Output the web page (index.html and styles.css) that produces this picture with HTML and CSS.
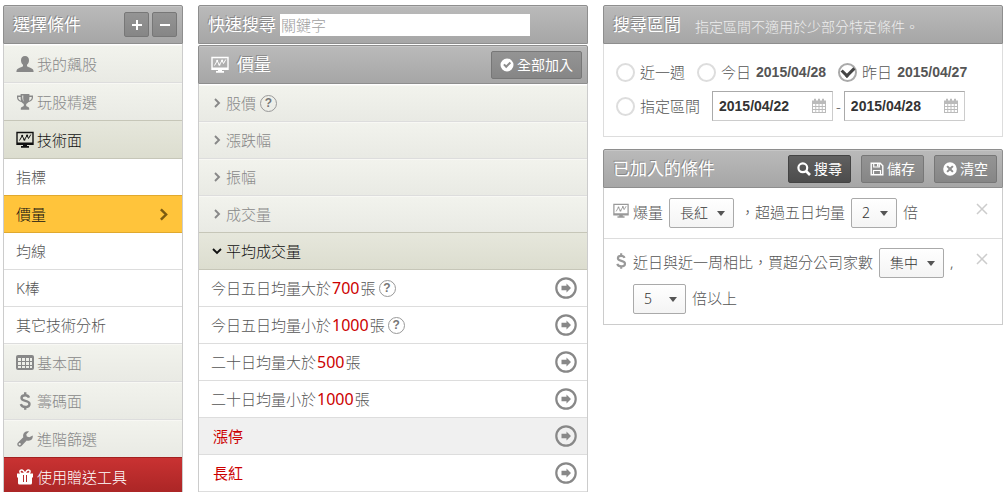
FILE: index.html
```
<!DOCTYPE html>
<html lang="zh-Hant">
<head>
<meta charset="utf-8">
<title>選擇條件</title>
<link rel="stylesheet" href="styles.css">
</head>
<body>
<svg class="defs" aria-hidden="true">
  <symbol id="user" viewBox="0 0 18 18"><path d="M9 1c-2.600 0-4 1.700-4 4.200 0 1.900.8 3.600 2 4.600v1.500c-.4.700-5 1.700-6 3.200-.5.700-.6 1.700-.6 2.500h17.200c0-.8-.1-1.800-.6-2.500-1-1.500-5.600-2.500-6-3.200V9.800c1.200-1 2-2.700 2-4.600C13 2.700 11.600 1 9 1z"/></symbol>
  <symbol id="trophy" viewBox="0 0 18 18"><path fill-rule="evenodd" d="M4.600 1h8.800v1.600H17v2c0 2.300-2 4.300-4.700 4.600-.6.900-1.300 1.400-2.100 1.800v1.600c0 .8.600 1 1.400 1.200 1 .3 1.600.8 1.600 1.900v1H4.800v-1c0-1.100.6-1.600 1.600-1.900.8-.2 1.400-.4 1.400-1.200V11c-.8-.4-1.500-.9-2.100-1.800C3 8.900 1 6.900 1 4.600v-2h3.600zM2.300 3.900v.8c0 1.200 1.100 2.500 2.700 3-.3-1.100-.4-2.400-.4-3.800zm13.400 0h-2.300c0 1.400-.1 2.700-.4 3.800 1.600-.5 2.700-1.800 2.700-3zM6.200 2.600c0 3 .5 5 1.500 6.200-.5-1.800-.6-4-.4-6.200z"/></symbol>
  <symbol id="monitor" viewBox="0 0 18 18"><path d="M1 1.500h16v11.800H1z" fill="none" stroke="currentColor" stroke-width="1.400"/><path d="M1 11.500h16v2H1zM7 13h4v2H7zM5 15h8v1.700H5z"/><path d="M3.500 9.500l2.700-4.700L8.400 9l2.700-4.700 1.400 3.200 2.300-4" fill="none" stroke="currentColor"/><circle cx="6.200" cy="4.800" r="1"/><circle cx="8.400" cy="8.700" r="1"/><circle cx="11.100" cy="4.500" r="1"/></symbol>
  <symbol id="table" viewBox="0 0 18 18"><path fill-rule="evenodd" d="M2 1h14q2 0 2 2v11q0 2-2 2H2q-2 0-2-2V3Q0 1 2 1zM2 4v3h3V4zm4 0v3h3V4zm4 0v3h3V4zm4 0v3h2V4zM2 8v3h3V8zm4 0v3h3V8zm4 0v3h3V8zm4 0v3h2V8zM2 12v2h3v-2zm4 0v2h3v-2zm4 0v2h3v-2zm4 0v2h2v-2z"/></symbol>
  <symbol id="dollar" viewBox="0 0 18 18"><path d="M13 5.600C12.400 4 11 3.300 9.200 3.300c-2.200 0-3.700 1-3.700 2.700 0 4 8 1.700 8 6 0 1.900-1.700 3-4.200 3-2.200 0-3.900-.9-4.500-2.800M9.200.2v3M9.200 15v2.800" fill="none" stroke="currentColor" stroke-width="2.400"/></symbol>
  <symbol id="wrench" viewBox="0 0 18 18"><path fill-rule="evenodd" d="M16.700 5.400c.4 1.800-.3 3.500-1.700 4.500-1.300.9-2.900 1-4.300.5L5.500 15.900c-1 1-2.500 1-3.500 0s-1-2.500 0-3.500l5.300-5.200c-.5-1.600-.1-3.400 1.100-4.600 1.300-1.200 3-1.500 4.600-1.100l-2.700 2.700.5 2.400 2.500.6zM3.700 13a1.100 1.100 0 1 0 .1 2.200 1.100 1.100 0 0 0-.1-2.200z"/></symbol>
  <symbol id="gift" viewBox="0 0 18 18"><path fill-rule="evenodd" d="M1 5.500h3.200C2.900 4.600 2.800 2.800 4 1.800c1.500-1.200 3.200-.3 4 .8l1 1.300 1-1.300c.8-1.100 2.500-2 4-.8 1.200 1 1.100 2.800-.2 3.700H17v4h-1V15q0 1.500-1.500 1.500h-11Q2 16.500 2 15V9.500H1zM5 3c-.7.700-.2 1.800.8 1.800h2L6.700 3.300C6.300 2.700 5.500 2.500 5 3zm8 0c-.5-.5-1.300-.3-1.700.3l-1.100 1.500h2c1 0 1.500-1.100.8-1.800zM7 7v7h1V7zm3 0v7h1V7z"/></symbol>
  <symbol id="right" viewBox="0 0 10 10"><path d="M3 1l4 4-4 4" fill="none" stroke="currentColor" stroke-width="1.900"/></symbol>
  <symbol id="down" viewBox="0 0 10 10"><path d="M1 3l4 4 4-4" fill="none" stroke="currentColor" stroke-width="1.900"/></symbol>
  <symbol id="plus" viewBox="0 0 10 10"><path d="M5 0v10M0 5h10" stroke="currentColor" stroke-width="2"/></symbol>
  <symbol id="minus" viewBox="0 0 10 10"><path d="M0 5h10" stroke="currentColor" stroke-width="2"/></symbol>
  <symbol id="add" viewBox="0 0 22 22"><circle cx="11" cy="11" r="9.700" fill="none" stroke="currentColor" stroke-width="2.200"/><path d="M6.500 8.700h5V6.500L16 11l-4.500 4.500v-2.200h-5z"/></symbol>
  <symbol id="check" viewBox="0 0 14 14"><path fill-rule="evenodd" d="M7 .5a6.500 6.500 0 1 1 0 13 6.500 6.500 0 0 1 0-13zM3.200 7l3 3.200 4.900-5-1.400-1.400-3.500 3.500-1.500-1.600z"/></symbol>
  <symbol id="cancel" viewBox="0 0 14 14"><path fill-rule="evenodd" d="M7 .2a6.800 6.800 0 1 1 0 13.600A6.800 6.800 0 0 1 7 .2zM4.800 3.400L3.400 4.800 5.600 7 3.400 9.200l1.400 1.400L7 8.400l2.200 2.200 1.400-1.400L8.400 7l2.200-2.200-1.400-1.400L7 5.600z"/></symbol>
  <symbol id="search" viewBox="0 0 14 14"><circle cx="5.800" cy="5.800" r="4.400" fill="none" stroke="currentColor" stroke-width="2.200"/><path d="M9 9l4 4" stroke="currentColor" stroke-width="2.600"/></symbol>
  <symbol id="save" viewBox="0 0 14 14"><path d="M1.200 1.200h9l2.600 2.600v9H1.200z" fill="none" stroke="currentColor" stroke-width="1.400"/><path d="M3.700 1v4h5.600V1M3.500 13V8.500h7V13" fill="none" stroke="currentColor" stroke-width="1.200"/><path d="M7 1.500h1.500v3H7z"/></symbol>
  <symbol id="calendar" viewBox="0 0 16 16"><path fill-rule="evenodd" d="M1 2.500h2V.8h2v1.700h2V.8h2v1.700h2V.8h2v1.700h2V15H1zM2 6v2h2.300V6zm3.200 0v2h2.300V6zm3.300 0v2h2.300V6zm3.200 0v2H14V6zM2 9v2h2.300V9zm3.200 0v2h2.300V9zm3.300 0v2h2.300V9zm3.200 0v2H14V9zM2 12v2h2.300v-2zm3.200 0v2h2.300v-2zm3.300 0v2h2.300v-2zm3.200 0v2H14v-2z"/></symbol>
  <symbol id="close" viewBox="0 0 12 12"><path d="M1 1l10 10M11 1L1 11" stroke="currentColor" stroke-width="1.500"/></symbol>
</svg>

<main class="page">
  <nav class="column">
    <header class="bar">
      <h2 class="title">選擇條件</h2>
      <div class="tools tight">
        <button class="btn square" aria-label="展開"><svg class="icon tiny"><use href="#plus"/></svg></button>
        <button class="btn square" aria-label="收合"><svg class="icon tiny"><use href="#minus"/></svg></button>
      </div>
    </header>
    <ul class="list">
      <li><a class="group" href="#"><svg class="icon"><use href="#user"/></svg>我的飆股</a></li>
      <li><a class="group" href="#"><svg class="icon"><use href="#trophy"/></svg>玩股精選</a></li>
      <li><a class="group open" href="#"><svg class="icon"><use href="#monitor"/></svg>技術面</a></li>
      <li><a class="item" href="#">指標</a></li>
      <li><a class="item current" href="#">價量<svg class="icon arrow"><use href="#right"/></svg></a></li>
      <li><a class="item" href="#">均線</a></li>
      <li><a class="item" href="#">K棒</a></li>
      <li><a class="item" href="#">其它技術分析</a></li>
      <li><a class="group" href="#"><svg class="icon"><use href="#table"/></svg>基本面</a></li>
      <li><a class="group" href="#"><svg class="icon"><use href="#dollar"/></svg>籌碼面</a></li>
      <li><a class="group" href="#"><svg class="icon"><use href="#wrench"/></svg>進階篩選</a></li>
      <li><a class="group gift" href="#"><svg class="icon"><use href="#gift"/></svg>使用贈送工具</a></li>
    </ul>
  </nav>

  <section class="column">
    <div class="bar find">
      <label class="title" for="keyword">快速搜尋</label>
      <input class="keyword" id="keyword" type="text" placeholder="關鍵字">
    </div>
    <header class="bar">
      <svg class="icon"><use href="#monitor"/></svg>
      <h2 class="title">價量</h2>
      <div class="tools"><button class="btn"><svg class="icon small"><use href="#check"/></svg>全部加入</button></div>
    </header>
    <ul class="list">
      <li><a class="group fold" href="#"><svg class="icon tiny"><use href="#right"/></svg>股價<span class="help">?</span></a></li>
      <li><a class="group fold" href="#"><svg class="icon tiny"><use href="#right"/></svg>漲跌幅</a></li>
      <li><a class="group fold" href="#"><svg class="icon tiny"><use href="#right"/></svg>振幅</a></li>
      <li><a class="group fold" href="#"><svg class="icon tiny"><use href="#right"/></svg>成交量</a></li>
      <li><a class="group fold open" href="#"><svg class="icon tiny"><use href="#down"/></svg>平均成交量</a></li>
      <li class="item rule"><span>今日五日均量大於<b class="num">700</b>張</span><span class="help">?</span><button class="add" aria-label="加入"><svg class="icon big"><use href="#add"/></svg></button></li>
      <li class="item rule"><span>今日五日均量小於<b class="num">1000</b>張</span><span class="help">?</span><button class="add" aria-label="加入"><svg class="icon big"><use href="#add"/></svg></button></li>
      <li class="item rule"><span>二十日均量大於<b class="num">500</b>張</span><button class="add" aria-label="加入"><svg class="icon big"><use href="#add"/></svg></button></li>
      <li class="item rule"><span>二十日均量小於<b class="num">1000</b>張</span><button class="add" aria-label="加入"><svg class="icon big"><use href="#add"/></svg></button></li>
      <li class="item rule hot shade"><span>漲停</span><button class="add" aria-label="加入"><svg class="icon big"><use href="#add"/></svg></button></li>
      <li class="item rule hot"><span>長紅</span><button class="add" aria-label="加入"><svg class="icon big"><use href="#add"/></svg></button></li>
    </ul>
  </section>

  <div class="column side">
    <section>
      <header class="bar">
        <h2 class="title">搜尋區間</h2>
        <p class="note">指定區間不適用於少部分特定條件。</p>
      </header>
      <form class="range">
        <div class="line">
          <label class="choice"><input class="radio" type="radio" name="range">近一週</label>
          <label class="choice"><input class="radio" type="radio" name="range">今日<b class="date">2015/04/28</b></label>
          <label class="choice"><input class="radio" type="radio" name="range" checked>昨日<b class="date">2015/04/27</b></label>
        </div>
        <div class="line">
          <label class="choice"><input class="radio" type="radio" name="range">指定區間</label>
          <div class="period">
            <span class="day"><input class="date-input" type="text" aria-label="開始日期" value="2015/04/22"><svg class="icon cal"><use href="#calendar"/></svg></span>
            <span class="dash">-</span>
            <span class="day"><input class="date-input" type="text" aria-label="結束日期" value="2015/04/28"><svg class="icon cal"><use href="#calendar"/></svg></span>
          </div>
        </div>
      </form>
    </section>
    <section>
      <header class="bar">
        <h2 class="title">已加入的條件</h2>
        <div class="tools">
          <button class="btn dark"><svg class="icon small"><use href="#search"/></svg>搜尋</button>
          <button class="btn"><svg class="icon small"><use href="#save"/></svg>儲存</button>
          <button class="btn"><svg class="icon small"><use href="#cancel"/></svg>清空</button>
        </div>
      </header>
      <ul class="list added">
        <li class="cond">
          <svg class="icon mark"><use href="#monitor"/></svg>
          <div class="words">
            <span>爆量</span>
            <span class="pick wide"><select class="select" aria-label="型態"><option>長紅</option></select></span>
            <span>，超過五日均量</span>
            <span class="pick"><select class="select" aria-label="倍數"><option>2</option></select></span>
            <span>倍</span>
          </div>
          <button class="close" aria-label="移除"><svg class="icon cross"><use href="#close"/></svg></button>
        </li>
        <li class="cond">
          <svg class="icon mark"><use href="#dollar"/></svg>
          <div class="words">
            <span>近日與近一周相比，買超分公司家數</span>
            <span class="pick wide"><select class="select" aria-label="方向"><option>集中</option></select></span>
            <span>,</span>
            <span class="pick mid"><select class="select" aria-label="倍數"><option>5</option></select></span>
            <span>倍以上</span>
          </div>
          <button class="close" aria-label="移除"><svg class="icon cross"><use href="#close"/></svg></button>
        </li>
      </ul>
    </section>
  </div>
</main>
</body>
</html>
```

FILE: styles.css
```
* {
  box-sizing: border-box;
}

body {
  margin: 0;
  background: #fff;
  color: #555;
  font: 300 15px/20px "Noto Sans", "Noto Sans CJK TC", sans-serif;
}

button,
input,
select {
  font: inherit;
  color: inherit;
  margin: 0;
}

button {
  cursor: pointer;
}

.defs {
  position: absolute;
  width: 0;
  height: 0;
}

.page {
  display: grid;
  grid-template-columns: 180px 39fr 40fr;
  gap: 15px;
  align-items: start;
  height: 100vh;
  overflow: hidden;
  padding: 5px 5px 0 3px;
}

.icon {
  flex: none;
  width: 18px;
  height: 18px;
  fill: currentColor;
}

.tiny {
  width: 10px;
  height: 10px;
}

.small {
  width: 14px;
  height: 14px;
}

.big {
  display: block;
  width: 22px;
  height: 22px;
}

/* Panel headers */
.bar {
  display: flex;
  align-items: center;
  height: 39px;
  padding: 0 5px 0 9px;
  border: 1px solid #8e8e8e;
  border-radius: 2px 2px 0 0;
  background: linear-gradient(#bababa, #a6a6a6);
  box-shadow: inset 0 1px #c6c6c6;
  color: #fff;
  text-shadow: -1px -1px 0 #888;
}

.bar > .icon {
  margin: 0 8px 0 3px;
}

.find {
  margin-bottom: 1px;
}

.title {
  margin: 0;
  font-size: 17px;
  font-weight: 400;
}

.note {
  margin: 4px 0 0 14px;
  font-size: 14px;
  color: #eee;
  text-shadow: none;
}

.tools {
  display: flex;
  gap: 10px;
  margin-left: auto;
}

.tight {
  gap: 3px;
}

.btn {
  display: flex;
  align-items: center;
  justify-content: center;
  gap: 3px;
  height: 28px;
  padding: 0 8px;
  border: 1px solid #777;
  border-radius: 2px;
  background: linear-gradient(#949494, #868686);
  color: #fff;
  font-size: 14px;
  font-weight: 400;
}

.square {
  width: 25px;
  height: 25px;
  padding: 0;
}

.dark {
  border-color: #444;
  background: linear-gradient(#606060, #4c4c4c);
}

.keyword {
  width: 250px;
  height: 22px;
  margin-left: 4px;
  padding: 0 1px;
  border: 0;
  background: #fff;
  color: #444;
}

.keyword::placeholder {
  color: #a0a0a0;
  opacity: 1;
}

/* Lists */
.list {
  margin: 0;
  padding: 1px 0 0;
  border: solid #ccc;
  border-width: 0 1px;
  list-style: none;
}

.group,
.item {
  display: flex;
  align-items: center;
  height: 37px;
  padding: 0 12px;
  border-bottom: 1px solid #ddd;
  color: #555;
  text-decoration: none;
}

.group {
  gap: 3px;
  height: 38px;
  background: linear-gradient(#f2f3ed, #e9eae4);
  box-shadow: inset 0 1px #f8f8f4;
  color: #888;
}

.fold {
  height: 37px;
  padding-left: 13px;
  gap: 4px;
}

.open {
  border-bottom-color: #c6c6b8;
  background: linear-gradient(#e6e7dc, #dcddcf);
  box-shadow: 0 -1px #c6c6b8;
  color: #111;
}

.current {
  border-color: #e0a92e;
  background: #ffc43b;
  box-shadow: 0 -1px #e0a92e;
  color: #111;
}

.arrow {
  width: 13px;
  height: 13px;
  margin-left: auto;
  color: #7c5a10;
}

.gift {
  border-color: #9b1c1c;
  background: linear-gradient(#c93232, #a92525);
  box-shadow: 0 -1px #a32020;
  color: #fff;
}

.rule {
  padding-right: 10px;
}

.num {
  margin: 0 1px;
  color: #c00;
  font-size: 16px;
  font-weight: 400;
}

.hot {
  padding-left: 14px;
  color: #c00;
  font-weight: 400;
}

.shade {
  background: #f0f0f0;
}

.help {
  display: flex;
  align-items: center;
  justify-content: center;
  width: 17px;
  height: 17px;
  margin-left: 3px;
  border: 1px solid #999;
  border-radius: 50%;
  color: #777;
  font: bold 12px/15px "Liberation Sans", Arial, sans-serif;
}

.fold .help {
  margin-left: 0;
}

.add,
.close {
  margin-left: auto;
  padding: 0;
  border: 0;
  background: none;
  color: #888;
}

/* Date range */
.side {
  display: grid;
  gap: 12px;
}

.range {
  display: grid;
  gap: 4px;
  padding: 13px 12px 15px;
  border: 1px solid #ddd;
  border-top: 0;
}

.line {
  display: flex;
  align-items: center;
  gap: 12px;
  min-height: 30px;
}

.choice {
  display: flex;
  align-items: center;
  gap: 5px;
}

.radio {
  display: grid;
  place-items: center;
  appearance: none;
  width: 19px;
  height: 19px;
  border: 2px solid #ddd;
  border-radius: 50%;
}

.radio:checked {
  border-color: #aaa;
}

.radio:checked::before {
  content: "";
  width: 9px;
  height: 6px;
  margin-bottom: 3px;
  border: solid #444;
  border-width: 0 0 3px 3px;
  transform: rotate(-45deg);
}

.date,
.date-input {
  font: bold 14px/20px "Liberation Sans", Arial, sans-serif;
}

.period {
  display: flex;
  align-items: center;
  gap: 3px;
}

.day {
  position: relative;
}

.date-input {
  display: block;
  width: 121px;
  height: 30px;
  padding: 0 6px;
  border: 1px solid #ccc;
  border-top-color: #aaa;
  border-left-color: #aaa;
  color: #333;
}

.cal {
  position: absolute;
  top: 7px;
  right: 6px;
  width: 16px;
  height: 16px;
  color: #bbb;
}

/* Added conditions */
.added {
  border-bottom-width: 1px;
}

.cond {
  display: flex;
  align-items: start;
  gap: 4px;
  padding: 5px 14px 8px 9px;
}

.cond + .cond {
  border-top: 1px solid #ddd;
}

.mark {
  width: 16px;
  height: 16px;
  margin-top: 9px;
  color: #999;
}

.words {
  display: flex;
  flex: 1;
  flex-wrap: wrap;
  gap: 0 6px;
  line-height: 36px;
}

.pick {
  position: relative;
  width: 46px;
  height: 30px;
  margin: 4px 0 2px;
}

.mid {
  width: 53px;
}

.wide {
  width: 65px;
}

.pick::after {
  content: "";
  position: absolute;
  top: 13px;
  right: 9px;
  border: solid transparent;
  border-width: 5px 4px 0;
  border-top-color: #555;
  pointer-events: none;
}

.select {
  display: block;
  appearance: none;
  width: 100%;
  height: 100%;
  padding: 0 10px;
  border: 1px solid #aaa;
  border-radius: 2px;
  background: linear-gradient(#fff, #f4f4f4);
  color: #333;
  font-size: 14px;
  line-height: 20px;
}

.close {
  margin-top: 9px;
  color: #ccc;
}

.cross {
  display: block;
  width: 12px;
  height: 12px;
}
```
